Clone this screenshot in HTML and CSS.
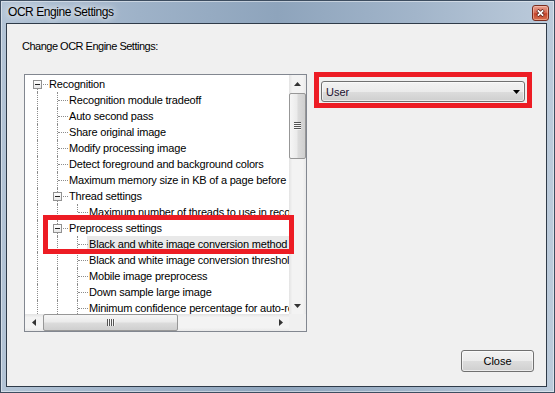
FILE: index.html
```html
<!DOCTYPE html>
<html lang="en">
<head>
    <meta charset="UTF-8">
    <title>OCR Engine Settings</title>
    <link rel="stylesheet" href="styles.css">
</head>
<body>
    <div class="window">
        <div class="titlebar">
            <span class="title">OCR Engine Settings</span>
            <span class="close-x">
                <svg width="9" height="8" viewBox="0 0 9 8"><path d="M1.5 1l6 6M7.5 1l-6 6" stroke="#5a1a10" stroke-width="3.2"/><path d="M1.8 1.3l5.4 5.4M7.2 1.3l-5.4 5.4" stroke="#fff" stroke-width="1.8"/></svg>
            </span>
        </div>

        <div class="client">
            <div class="caption">Change OCR Engine Settings:</div>

            <div class="settings">
                <div class="tree">
                    <div class="tree-view">
                        <div class="node"><span class="g first"><i class="box"></i></span><span class="label">Recognition</span></div>
                        <div class="node"><span class="g pipe"></span><span class="g tee"></span><span class="label">Recognition module tradeoff</span></div>
                        <div class="node"><span class="g pipe"></span><span class="g tee"></span><span class="label">Auto second pass</span></div>
                        <div class="node"><span class="g pipe"></span><span class="g tee"></span><span class="label">Share original image</span></div>
                        <div class="node"><span class="g pipe"></span><span class="g tee"></span><span class="label">Modify processing image</span></div>
                        <div class="node"><span class="g pipe"></span><span class="g tee"></span><span class="label">Detect foreground and background colors</span></div>
                        <div class="node"><span class="g pipe"></span><span class="g tee"></span><span class="label">Maximum memory size in KB of a page before swapping</span></div>
                        <div class="node"><span class="g pipe"></span><span class="g tee"><i class="box"></i></span><span class="label">Thread settings</span></div>
                        <div class="node"><span class="g pipe"></span><span class="g pipe"></span><span class="g elbow"></span><span class="label">Maximum number of threads to use in recognition</span></div>
                        <div class="node"><span class="g pipe"></span><span class="g tee"><i class="box"></i></span><span class="label">Preprocess settings</span></div>
                        <div class="node"><span class="g pipe"></span><span class="g pipe"></span><span class="g tee"></span><span class="label selected">Black and white image conversion method</span></div>
                        <div class="node"><span class="g pipe"></span><span class="g pipe"></span><span class="g tee"></span><span class="label">Black and white image conversion threshold</span></div>
                        <div class="node"><span class="g pipe"></span><span class="g pipe"></span><span class="g tee"></span><span class="label">Mobile image preprocess</span></div>
                        <div class="node"><span class="g pipe"></span><span class="g pipe"></span><span class="g tee"></span><span class="label">Down sample large image</span></div>
                        <div class="node"><span class="g pipe"></span><span class="g pipe"></span><span class="g tee"></span><span class="label">Minimum confidence percentage for auto-rotation</span></div>
                    </div>

                    <div class="vscroll">
                        <span class="arrow"><svg width="7" height="4"><path d="M0 4h7L3.5 0z" fill="#333"/></svg></span>
                        <div class="track">
                            <div class="thumb v-thumb">
                                <svg width="7" height="8"><path d="M0 .5h7M0 2.5h7M0 4.5h7M0 6.5h7" stroke="#555"/><path d="M0 1.5h7M0 3.5h7M0 5.5h7M0 7.5h7" stroke="#fff" stroke-opacity=".7"/></svg>
                            </div>
                        </div>
                        <span class="arrow"><svg width="7" height="4"><path d="M0 0h7L3.5 4z" fill="#333"/></svg></span>
                    </div>

                    <div class="hscroll">
                        <span class="arrow"><svg width="4" height="7"><path d="M4 0v7L0 3.5z" fill="#333"/></svg></span>
                        <div class="track">
                            <div class="thumb h-thumb">
                                <svg width="8" height="7"><path d="M.5 0v7M2.5 0v7M4.5 0v7M6.5 0v7" stroke="#555"/><path d="M1.5 0v7M3.5 0v7M5.5 0v7M7.5 0v7" stroke="#fff" stroke-opacity=".7"/></svg>
                            </div>
                        </div>
                        <span class="arrow"><svg width="4" height="7"><path d="M0 0v7L4 3.5z" fill="#333"/></svg></span>
                    </div>

                    <div class="corner"></div>

                    <div class="mark tree-mark"></div>
                </div>

                <div class="mark combo-mark">
                    <div class="combo">
                        <span>User</span>
                        <svg width="7" height="4"><path d="M0 0h7L3.5 4z" fill="#000"/></svg>
                    </div>
                </div>
            </div>

            <div class="footer">
                <button class="btn">Close</button>
            </div>
        </div>
    </div>
</body>
</html>
```

FILE: styles.css
```css
body { margin: 0; font-family: "Liberation Sans", Arial, sans-serif; }

.window {
    width: 555px; height: 393px; box-sizing: border-box;
    display: flex; flex-direction: column;
    padding: 0 7px 5px 5px;
    border: 1px solid #3d4d60;
    background: linear-gradient(90deg, #b3c4d6 0%, #9eb2c8 25%, #8ea4bc 50%, #a2b5ca 75%, #bccbdb 100%);
    box-shadow: inset 0 0 0 1px rgba(255, 255, 255, .45);
}

.titlebar {
    height: 22px; flex: none;
    display: flex; align-items: flex-start; justify-content: space-between;
    margin: 0 -7px 0 -5px; padding: 0 5px 0 7px;
}
.title {
    font-size: 12px; letter-spacing: -0.45px; line-height: 22px; color: #000;
    text-shadow: 0 0 6px #fff, 0 0 10px rgba(255, 255, 255, .8);
}
.close-x {
    width: 17px; height: 16px; margin-top: 4px; box-sizing: border-box;
    display: flex; align-items: center; justify-content: center;
    border: 1px solid #7a2c1e; border-radius: 3px;
    background: linear-gradient(#e8a090 0%, #d66c55 45%, #c4442b 55%, #d8704f 100%);
    box-shadow: inset 0 0 0 1px rgba(255, 220, 200, .45);
}

.client {
    flex: 1; display: flex; flex-direction: column;
    padding: 15px 12px 14px 15px;
    background: #f0f0f0; border: 1px solid #2f3b49;
    font-size: 11px; color: #000;
}
.caption { line-height: 14px; letter-spacing: -0.5px; }

.settings { display: flex; align-items: flex-start; gap: 7px; margin-top: 19px; padding-left: 2px; }

/* tree box */
.tree {
    position: relative; margin-top: 2px;
    width: 283px; height: 258px; box-sizing: border-box;
    border: 1px solid #828790; background: #fff;
    display: grid; grid-template-columns: 1fr 17px; grid-template-rows: 1fr 17px;
}
.tree-view { overflow: hidden; padding: 1px 0 0 2px; white-space: nowrap; letter-spacing: -0.2px; }
.node { display: flex; height: 16px; }
.label { line-height: 16px; padding: 0 2px; }
.label.selected { background: #e9e9e9; }

.g { position: relative; width: 20px; flex: none; }
.g::before, .g::after { content: ""; position: absolute; }
.pipe::before, .tee::before { left: 10px; top: 0; bottom: 0; border-left: 1px dotted #8c8c8c; }
.elbow::before { left: 10px; top: 0; height: 8px; border-left: 1px dotted #8c8c8c; }
.first::before { left: 10px; top: 8px; bottom: 0; border-left: 1px dotted #8c8c8c; }
.tee::after, .elbow::after, .first::after { left: 11px; top: 8px; width: 10px; border-top: 1px dotted #8c8c8c; }

.box {
    position: absolute; z-index: 1; left: 6px; top: 4px;
    width: 7px; height: 7px; border: 1px solid #919191;
    background: linear-gradient(#fff, #e8e8e8);
}
.box::after { content: ""; position: absolute; left: 1px; top: 3px; width: 5px; height: 1px; background: #222; }

/* scrollbars */
.vscroll, .hscroll { display: flex; }
.vscroll { flex-direction: column; background: linear-gradient(90deg, #e3e3e3, #f3f3f3 20%, #f3f3f3 80%, #e9e9e9); }
.hscroll { background: linear-gradient(#e3e3e3, #f3f3f3 20%, #f3f3f3 80%, #e9e9e9); }
.arrow { width: 17px; height: 17px; flex: none; display: flex; align-items: center; justify-content: center; }
.track { flex: 1; display: flex; }
.vscroll .track { flex-direction: column; }
.thumb {
    box-sizing: border-box; border: 1px solid #979797; border-radius: 2px;
    display: flex; align-items: center; justify-content: center;
}
.v-thumb { margin: 1px 0 0 0; height: 66px; background: linear-gradient(90deg, #f6f6f6, #ebebeb 45%, #dbdbdb 55%, #cfcfcf); }
.h-thumb { margin: 0 0 0 1px; width: 135px; background: linear-gradient(#f6f6f6, #ebebeb 45%, #dbdbdb 55%, #cfcfcf); }
.corner { background: #f0f0f0; }

/* red highlight marks */
.mark { border: 5px solid #ed1c24; }
.tree-mark { position: absolute; left: 18px; top: 140px; width: 241px; height: 29px; }
.combo-mark { padding: 4px 2px 1px 2px; }

.combo {
    width: 204px; height: 21px; box-sizing: border-box;
    display: flex; align-items: center; justify-content: space-between;
    padding: 0 4px 0 4px;
    border: 1px solid #707070; border-radius: 3px;
    background: linear-gradient(#f2f2f2 0%, #ebebeb 50%, #dddddd 50%, #cfcfcf 100%);
    box-shadow: inset 0 0 0 1px rgba(255, 255, 255, .6);
    color: #1a1030;
}

.footer { margin-top: auto; display: flex; justify-content: flex-end; }
.btn {
    width: 73px; height: 22px; padding: 0;
    font: 11px "Liberation Sans", Arial, sans-serif; color: #000;
    border: 1px solid #707070; border-radius: 3px;
    background: linear-gradient(#f2f2f2 0%, #ebebeb 50%, #dddddd 50%, #cfcfcf 100%);
    box-shadow: inset 0 0 0 1px rgba(255, 255, 255, .6);
}
```
